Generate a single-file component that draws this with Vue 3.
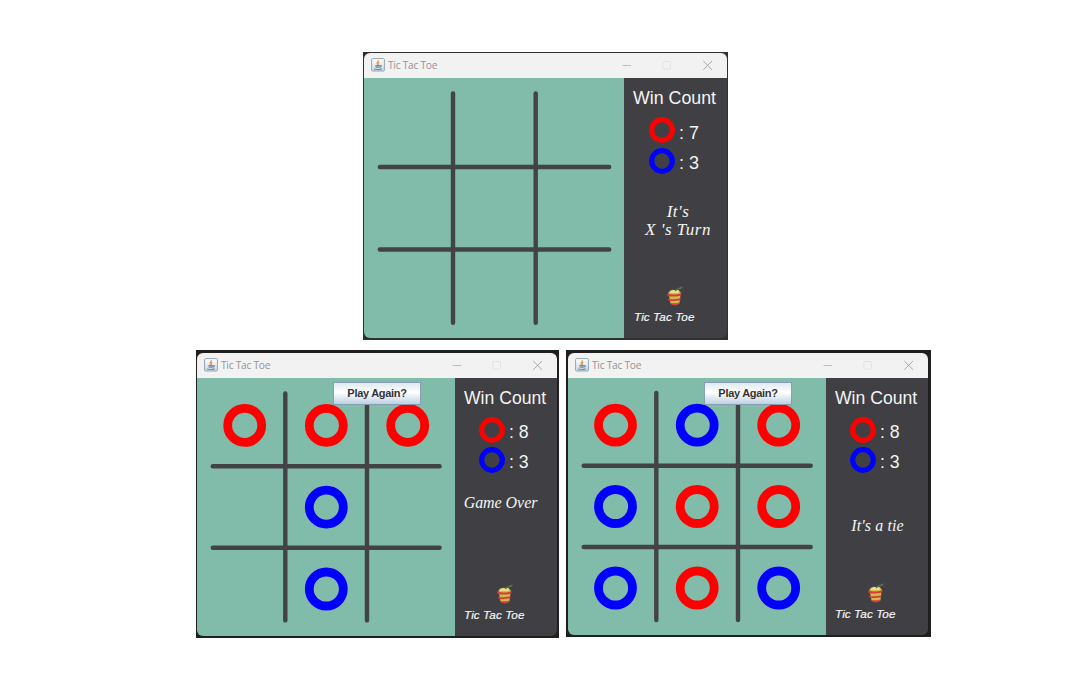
<script setup>
const R = 'red'
const B = 'blue'

const games = [
  {
    id: 'start', w: 260, h: 260, cols: [89, 171.7], rows: [89, 171.5],
    lineX: [15.8, 245.2], lineY: [15.5, 244.8], marks: [],
    red: 7, blue: 3, message: ["It's", "X 's Turn"], over: false
  },
  {
    id: 'won', w: 258, h: 258, cols: [88.3, 170], rows: [88.2, 169.8],
    lineX: [15.8, 242.6], lineY: [15.4, 242.4],
    marks: [
      [47.7, 47.4, R], [129.3, 47.4, R], [210.7, 47.4, R],
      [129.3, 129.2, B], [129.3, 211, B]
    ],
    red: 8, blue: 3, message: ['Game Over'], over: true
  },
  {
    id: 'tie', w: 258, h: 257, cols: [88.3, 170], rows: [87.7, 169],
    lineX: [15.7, 242.7], lineY: [15, 242],
    marks: [
      [47.5, 47.1, R], [129.2, 47.1, B], [210.7, 47.1, R],
      [47.5, 128.5, B], [129.2, 128.5, R], [210.7, 128.5, R],
      [47.5, 210, B], [129.2, 210, R], [210.7, 210, B]
    ],
    red: 8, blue: 3, message: ["It's a tie"], over: true
  }
]
</script>

<template>
  <main class="gallery">
    <section v-for="g in games" :key="g.id" class="frame" :class="g.id">
      <div class="window">
        <header class="titlebar">
          <svg class="java" viewBox="0 0 14 14">
            <defs>
              <linearGradient :id="'ico-' + g.id" x1="0" y1="0" x2="0" y2="1">
                <stop offset="0" stop-color="#fff" />
                <stop offset="1" stop-color="#c9d8e4" />
              </linearGradient>
            </defs>
            <rect x=".6" y=".6" width="12.8" height="12.4" rx="1" :fill="`url(#ico-${g.id})`" stroke="#91a5b5" />
            <path d="M7.3 2.2C7.8 3.8 4.9 4.2 6.6 6.8M8.3 4C6.8 4.8 7.6 5.5 7.3 6.9" fill="none" stroke="#e9a05c" stroke-width="1.4" />
            <path d="M4.3 7.6H9M4.6 9.1H8.8M3 11Q6.8 12 10.8 10.9M9.2 7.6Q11.4 7.4 9.2 9.4" fill="none" stroke="#6f8fa8" stroke-width="1.2" />
          </svg>
          <span class="caption">Tic Tac Toe</span>
          <svg class="controls" viewBox="0 0 92 12">
            <path d="M1.6 6.5H10.2" stroke="#bcbcbc" />
            <rect x="41.8" y="2.5" width="7.7" height="7.7" rx=".7" fill="none" stroke="#e3e3e3" />
            <path d="M82.3 2L91 10.7M91 2L82.3 10.7" stroke="#aaa" />
          </svg>
        </header>
        <div class="content">
          <div class="board">
            <svg class="grid" :viewBox="`0 0 ${g.w} ${g.h}`" :width="g.w" :height="g.h">
              <g stroke="#434246" stroke-width="4.4" stroke-linecap="round">
                <line v-for="x in g.cols" :key="'c' + x" :x1="x" :x2="x" :y1="g.lineY[0]" :y2="g.lineY[1]" />
                <line v-for="y in g.rows" :key="'r' + y" :y1="y" :y2="y" :x1="g.lineX[0]" :x2="g.lineX[1]" />
              </g>
              <circle v-for="([x, y, c], i) in g.marks" :key="i" :cx="x" :cy="y" r="17" fill="none" :stroke="c" stroke-width="8.8" />
            </svg>
            <button v-if="g.over" class="again">Play Again?</button>
          </div>
          <aside class="side">
            <h2 class="heading">Win Count</h2>
            <div class="score">
              <svg class="ring" viewBox="0 0 26 26"><circle cx="13" cy="13" r="10.3" fill="none" stroke="red" stroke-width="5.2" /></svg>
              <span>: {{ g.red }}</span>
            </div>
            <div class="score">
              <svg class="ring" viewBox="0 0 26 26"><circle cx="13" cy="13" r="10.3" fill="none" stroke="blue" stroke-width="5.2" /></svg>
              <span>: {{ g.blue }}</span>
            </div>
            <p class="message"><span v-for="m in g.message" :key="m">{{ m }}</span></p>
            <div class="brand">
              <svg class="apple" viewBox="0 0 18 20">
                <path d="M2.4 6.5Q4.5 2.8 8.5 4Q13 2.8 14.8 6.5L13.4 17.5Q9 20.6 4.5 17.5Z" fill="#cdbb4c" />
                <path d="M4.4 5.4Q8 3.2 12.8 4.6L12.6 7H4Z" fill="#e9df94" />
                <path d="M.8 7.6Q8 9.6 15.6 7.2L15 9.7Q8 11.2 1.6 10ZM1.8 12.7Q8 14.2 15 12L14.2 14.3Q8 15.6 2.6 14.8ZM3.8 16.8Q8.5 18 13.4 16.4Q12.5 19.5 8.5 19.4Q5 19.3 3.8 16.8Z" fill="#d83a35" />
                <path d="M8.6 5Q9.6 2.6 12 2.3Q14 .6 17.4 .4Q15.5 3.5 12.4 3.4Q10.5 3.6 10 5.2Z" fill="#56724c" />
              </svg>
              <span class="brand-name">Tic Tac Toe</span>
            </div>
          </aside>
        </div>
      </div>
    </section>
  </main>
</template>

<style>
body { background: #fff; }
</style>

<style scoped>
.gallery {
  box-sizing: border-box;
  width: 1080px;
  height: 700px;
  padding: 52px 0 0 196px;
  display: grid;
  grid-template-columns: 363px 365px;
  grid-template-rows: 288px 288px;
  column-gap: 7px;
  row-gap: 10px;
  font-family: "Liberation Sans", Arial, sans-serif;
}
.frame { box-sizing: border-box; background: #1f1f1f; display: flex; }
.start { grid-column: 1 / 3; width: 365px; height: 288px; margin-left: 167px; padding: 1px 1px 2px 1px; background: #303033; }
.won { width: 363px; height: 288px; padding: 3px 2px 2px 1px; }
.tie { width: 365px; height: 287px; padding: 3px 3px 2px 2px; }
.window {
  flex: 1;
  display: flex;
  flex-direction: column;
  overflow: hidden;
  border-radius: 6px;
}
.titlebar {
  height: 25px;
  flex: none;
  box-sizing: border-box;
  display: flex;
  align-items: center;
  padding: 0 14px 1px 7px;
  background: #f2f2f2;
}
.java { width: 14px; height: 14px; }
.caption {
  margin-left: 3px;
  flex: 1;
  font: 10.2px/14px "Open Sans", "Noto Sans", sans-serif;
  letter-spacing: -.25px;
  color: #949494;
  white-space: nowrap;
}
.controls { width: 92px; height: 12px; }
.content { flex: 1; display: flex; min-height: 0; }
.board { position: relative; background: #81bcaa; width: 258px; flex: none; }
.start .board { width: 260px; }
.grid { display: block; }
.again {
  position: absolute;
  left: 136px;
  top: 4px;
  width: 88px;
  height: 23px;
  box-sizing: border-box;
  padding: 0;
  border: 1px solid #8a9eb3;
  border-radius: 0;
  background: linear-gradient(#dfe9f3, #fff 45%, #bdd0e4);
  font: bold 11px/21px "Liberation Sans", Arial, sans-serif;
  letter-spacing: -.3px;
  color: #333;
  white-space: nowrap;
}
.side {
  flex: 1;
  min-width: 0;
  display: flex;
  flex-direction: column;
  background: #403f43;
  color: #f4f4f4;
}
.heading { margin: 10px 0 7px 9px; font-size: 17.8px; font-weight: 400; line-height: 20px; white-space: nowrap; }
.won .heading, .tie .heading { font-size: 17.6px; margin-bottom: 6.5px; }
.score { display: flex; align-items: center; height: 30.5px; padding-left: 24px; font-size: 18px; line-height: 20px; }
.won .score, .tie .score { height: 30.2px; font-size: 17.7px; }
.start .score { padding-left: 25px; }
.ring { width: 26px; height: 26px; margin-right: 4px; }
.score span { padding-top: 5px; }
.message {
  display: flex;
  flex-direction: column;
  align-items: center;
  margin: 27px 0 0 5px;
  font: italic 17px/17.5px "Liberation Serif", "Times New Roman", serif;
  letter-spacing: .5px;
  white-space: nowrap;
}
.won .message { margin: 19px 11px 0 0; font-size: 16px; letter-spacing: -.05px; }
.tie .message { margin-top: 42px; margin-left: 1px; font-size: 16px; letter-spacing: .1px; }
.brand { margin-top: auto; padding: 0 0 13px 9px; display: flex; flex-direction: column; }
.start .brand { padding-left: 10px; }
.apple { width: 18px; height: 20px; margin-left: 32px; }
.brand-name { margin-top: 3px; font-size: 11.7px; letter-spacing: .1px; font-style: italic; line-height: 16px; white-space: nowrap; -webkit-text-stroke: .2px #f4f4f4; }
</style>
